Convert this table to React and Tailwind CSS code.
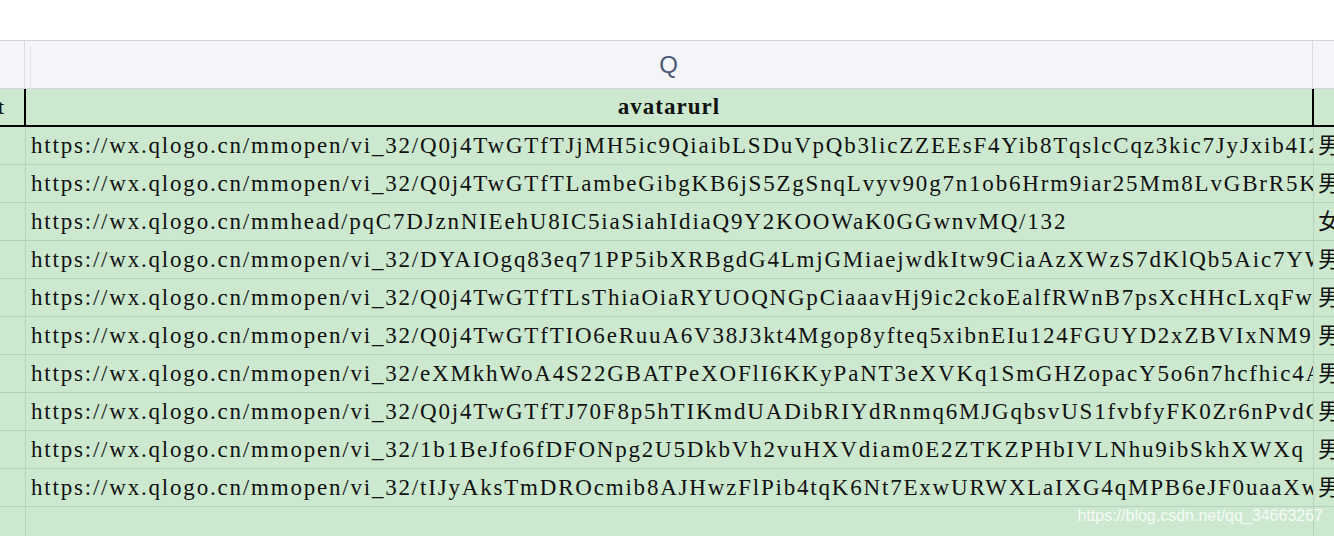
import React from 'react';

const rows = [
  { url: 'https://wx.qlogo.cn/mmopen/vi_32/Q0j4TwGTfTJjMH5ic9QiaibLSDuVpQb3licZZEEsF4Yib8TqslcCqz3kic7JyJxib4I2Zw', sex: '男' },
  { url: 'https://wx.qlogo.cn/mmopen/vi_32/Q0j4TwGTfTLambeGibgKB6jS5ZgSnqLvyv90g7n1ob6Hrm9iar25Mm8LvGBrR5KAw', sex: '男' },
  { url: 'https://wx.qlogo.cn/mmhead/pqC7DJznNIEehU8IC5iaSiahIdiaQ9Y2KOOWaK0GGwnvMQ/132', sex: '女' },
  { url: 'https://wx.qlogo.cn/mmopen/vi_32/DYAIOgq83eq71PP5ibXRBgdG4LmjGMiaejwdkItw9CiaAzXWzS7dKlQb5Aic7YWqA', sex: '男' },
  { url: 'https://wx.qlogo.cn/mmopen/vi_32/Q0j4TwGTfTLsThiaOiaRYUOQNGpCiaaavHj9ic2ckoEalfRWnB7psXcHHcLxqFw', sex: '男' },
  { url: 'https://wx.qlogo.cn/mmopen/vi_32/Q0j4TwGTfTIO6eRuuA6V38J3kt4Mgop8yfteq5xibnEIu124FGUYD2xZBVIxNM9Q', sex: '男' },
  { url: 'https://wx.qlogo.cn/mmopen/vi_32/eXMkhWoA4S22GBATPeXOFlI6KKyPaNT3eXVKq1SmGHZopacY5o6n7hcfhic4A', sex: '男' },
  { url: 'https://wx.qlogo.cn/mmopen/vi_32/Q0j4TwGTfTJ70F8p5hTIKmdUADibRIYdRnmq6MJGqbsvUS1fvbfyFK0Zr6nPvdQ', sex: '男' },
  { url: 'https://wx.qlogo.cn/mmopen/vi_32/1b1BeJfo6fDFONpg2U5DkbVh2vuHXVdiam0E2ZTKZPHbIVLNhu9ibSkhXWXq', sex: '男' },
  { url: 'https://wx.qlogo.cn/mmopen/vi_32/tIJyAksTmDROcmib8AJHwzFlPib4tqK6Nt7ExwURWXLaIXG4qMPB6eJF0uaaXw', sex: '男' },
];

const serif = "font-['Liberation_Serif','Noto_Sans_CJK_SC',serif]";

function DataRow({ url, sex }) {
  return (
    <div className="flex h-[38px] border-b border-[#b5d3bc]">
      <div className="w-[26px] shrink-0 border-r border-[#b5d3bc]" />
      <div className={`w-[1288px] shrink-0 overflow-hidden whitespace-nowrap border-r border-[#b5d3bc] pl-[5px] text-[23px] leading-[37px] tracking-[1.8px] text-[#111] ${serif}`}>
        {url}
      </div>
      <div className={`flex-1 overflow-hidden whitespace-nowrap pl-[4px] text-[22px] leading-[37px] text-[#111] ${serif}`}>
        {sex}
      </div>
    </div>
  );
}

export default function App() {
  return (
    <div className="relative h-[536px] w-[1334px] overflow-hidden bg-white">
      <div className="h-[41px] border-b border-[#d3d5d9] bg-white" />

      <div className="flex h-[48px] border-b border-[#d2d5da] bg-[#f4f5f8]">
        <div className="w-[25px] shrink-0 border-r border-[#d9dbdf]" />
        <div className="relative flex w-[1288px] shrink-0 items-center justify-center border-r border-[#d9dbdf]">
          <div className="absolute left-[5px] top-[6px] h-[42px] w-px bg-[#e1e3e6]" />
          <span className="font-['Liberation_Sans',sans-serif] text-[24px] text-[#4b5a78]">Q</span>
        </div>
        <div className="flex-1" />
      </div>

      <div className="bg-[#cce8cf]">
        <div className="flex h-[38px] border-b-2 border-black">
          <div className={`w-[24px] shrink-0 overflow-hidden whitespace-nowrap text-left text-[22px] leading-[36px] text-[#111] ${serif}`}>
            <span className="-ml-[2px] inline-block">t</span>
          </div>
          <div className={`w-[1290px] shrink-0 border-x-2 border-black text-center text-[23px] font-bold leading-[36px] tracking-[1px] text-[#111] ${serif}`}>
            avatarurl
          </div>
          <div className="flex-1" />
        </div>
        {rows.map((r, i) => (
          <DataRow key={i} url={r.url} sex={r.sex} />
        ))}
        <div className="flex h-[40px]">
          <div className="w-[26px] shrink-0 border-r border-[#b5d3bc]" />
          <div className="w-[1288px] shrink-0 border-r border-[#b5d3bc]" />
          <div className="flex-1" />
        </div>
      </div>

      <div className="absolute bottom-[8px] right-[11px] font-['Liberation_Sans',sans-serif] text-[16px] text-white/80">
        https://blog.csdn.net/qq_34663267
      </div>
    </div>
  );
}
